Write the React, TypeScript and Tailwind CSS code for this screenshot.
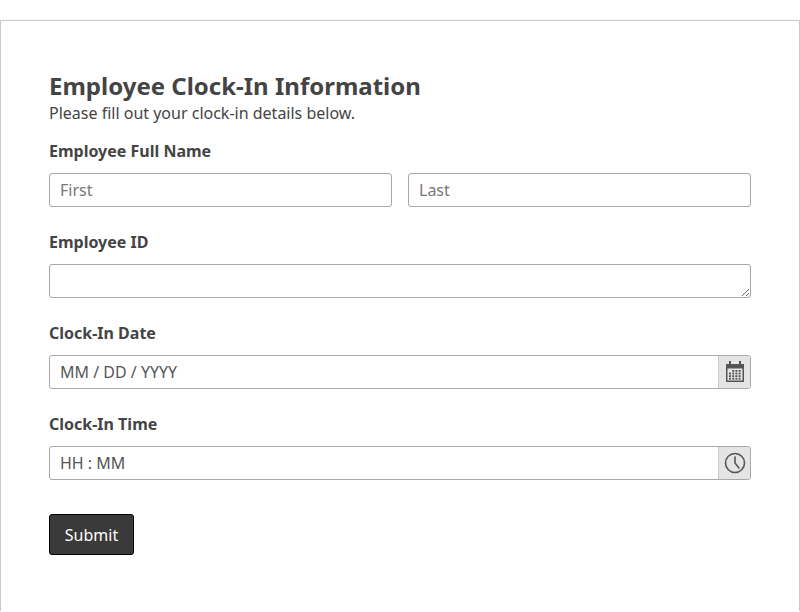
import { Fragment } from 'react';

function CalendarIcon() {
  return (
    <svg width="20" height="22" viewBox="0 0 20 22" fill="#555">
      <rect x="4" y="0" width="2" height="4" />
      <rect x="14" y="0" width="2" height="4" />
      <path d="M1 3h18v18H1z M2.5 7.5v12h15v-12z" fillRule="evenodd" />
      {[0, 1, 2, 3].map((r) =>
        [0, 1, 2, 3].map((c) =>
          r === 0 && c === 0 ? null : (
            <rect key={`${r}-${c}`} x={4 + c * 3.2} y={9 + r * 2.6} width="2" height="1.8" />
          )
        )
      )}
    </svg>
  );
}

function ClockIcon() {
  return (
    <svg width="22" height="22" viewBox="0 0 22 22" fill="none" stroke="#555" strokeWidth="1.6">
      <circle cx="11" cy="11" r="9.5" />
      <path d="M11 5v6l4 5" strokeLinecap="round" />
    </svg>
  );
}

const inputCls =
  'h-[34px] w-full rounded-[3px] border border-[#a8a8a8] bg-white px-[10px] text-[16px] text-[#444] placeholder:text-[#777] outline-none';

export default function App() {
  const fields = [
    { label: 'Clock-In Date', placeholder: 'MM / DD / YYYY', icon: <CalendarIcon /> },
    { label: 'Clock-In Time', placeholder: 'HH : MM', icon: <ClockIcon /> },
  ];

  return (
    <div className="min-h-[612px] bg-white pt-5 font-['Roboto',sans-serif] text-[#444]">
      <div className="border border-b-0 border-[#c8c8c8] px-12 pb-[56px] pt-[50px]">
        <h1 className="text-[24px] font-bold leading-[30px]">Employee Clock-In Information</h1>
        <p className="text-[16px] leading-[24px]">Please fill out your clock-in details below.</p>

        <label className="mt-[14px] block text-[16px] font-bold leading-[24px]">Employee Full Name</label>
        <div className="mt-[10px] flex gap-4">
          <input className={inputCls} placeholder="First" />
          <input className={inputCls} placeholder="Last" />
        </div>

        <label className="mt-[23px] block text-[16px] font-bold leading-[24px]">Employee ID</label>
        <textarea className={`${inputCls} mt-[10px] block resize-y`} />

        {fields.map((f) => (
          <Fragment key={f.label}>
            <label className="mt-[23px] block text-[16px] font-bold leading-[24px]">{f.label}</label>
            <div className="mt-[10px] flex h-[34px] overflow-hidden rounded-[3px] border border-[#a8a8a8]">
              <input
                className="h-full flex-1 px-[10px] text-[16px] text-[#444] placeholder:text-[#555] outline-none"
                placeholder={f.placeholder}
              />
              <div className="flex w-[32px] items-center justify-center border-l border-[#c8c8c8] bg-[#e4e4e4]">
                {f.icon}
              </div>
            </div>
          </Fragment>
        ))}

        <button className="mt-[34px] h-[41px] w-[85px] rounded-[3px] border border-black bg-[#3a3a3a] text-[16px] text-white">
          Submit
        </button>
      </div>
    </div>
  );
}
